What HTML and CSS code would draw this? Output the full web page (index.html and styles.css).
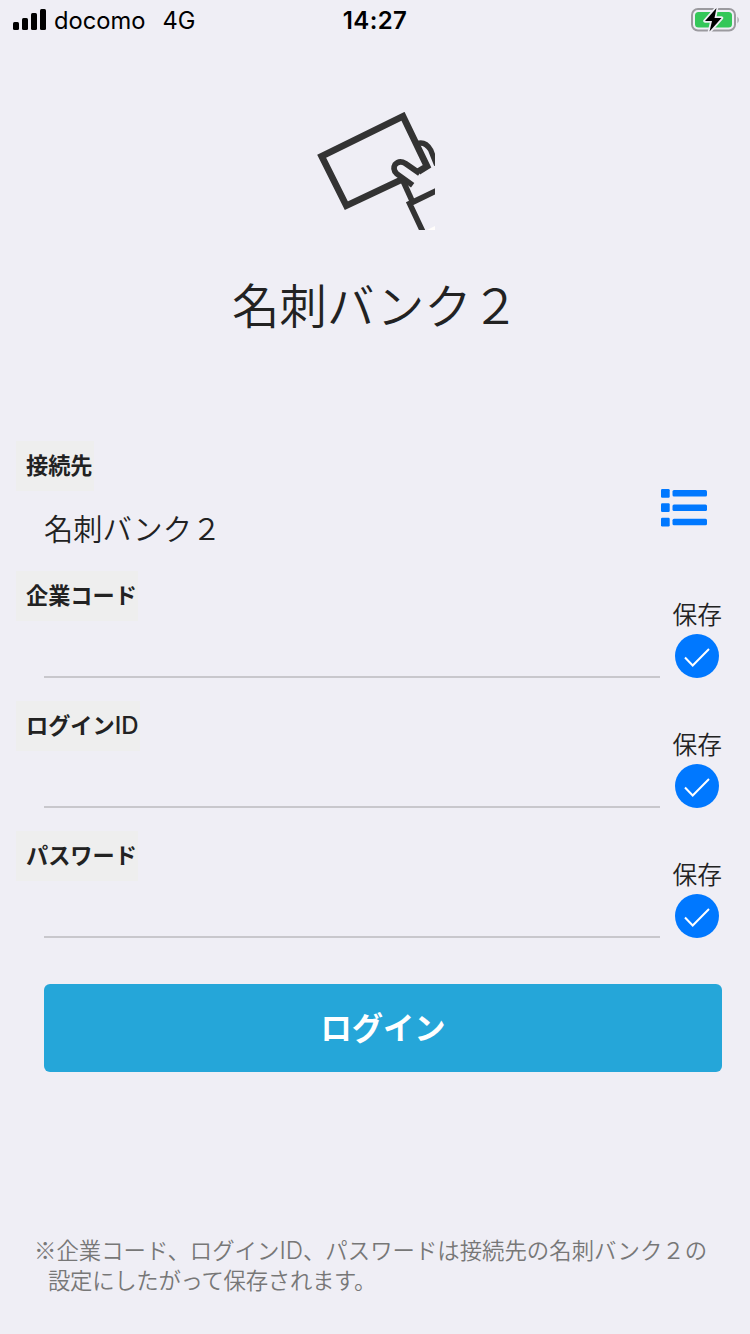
FILE: index.html
```
<!DOCTYPE html>
<html lang="ja">
<head>
    <meta charset="UTF-8">
    <meta name="viewport" content="width=device-width, initial-scale=1.0">
    <title>名刺バンク２</title>
    <link rel="stylesheet" href="styles.css">
</head>
<body>
    <header class="status-bar">
        <div class="carrier">
            <svg class="signal" width="34" height="22" viewBox="0 0 34 22">
                <rect x="0" y="13" width="6" height="8" rx="1.5"/>
                <rect x="9" y="9" width="6" height="12" rx="1.5"/>
                <rect x="18" y="4" width="6" height="17" rx="1.5"/>
                <rect x="27" y="0" width="6" height="21" rx="1.5"/>
            </svg>
            <span class="carrier-name">docomo</span>
            <span class="network">4G</span>
        </div>
        <div class="time">14:27</div>
        <svg class="battery" width="49" height="26" viewBox="0 0 49 26">
            <rect x="1" y="2" width="43" height="21.5" rx="6" fill="none" stroke="#9b9a9f" stroke-width="2"/>
            <path d="M46.5 9.5 Q49 13 46.5 16.5 Z" fill="#9b9a9f"/>
            <rect x="4" y="5" width="37" height="15.5" rx="3.5" fill="#34c759"/>
            <path d="M25.5 1 L14 14 H21 L18.5 24.5 L30.5 11 H23.5 Z" fill="#000" stroke="#efeef5" stroke-width="3.5" stroke-linejoin="round" paint-order="stroke"/>
        </svg>
    </header>

    <main>
        <div class="logo">
            <svg width="118" height="118" viewBox="36 36 354 354" fill="none" stroke="#333" stroke-width="20">
                <path d="M340 215 L366 199 L294 49 L50 169 L124 317 L292 238"/>
                <path d="M338 130 Q362 124 377 150 L395 195" stroke-width="16"/>
                <path d="M323 256 L275 221 Q262 207 270 194 Q283 179 302 191 L344 220" stroke-width="17"/>
                <path d="M293 240 L322 304" stroke-width="17"/>
                <path d="M395 272 L314 311 L354 396" stroke-width="17"/>
                <path d="M366 390 L390 378 V390 Z" fill="#fffdfb" stroke="none"/>
            </svg>
        </div>
        <h1>名刺バンク２</h1>

        <form>
            <div class="field">
                <label>接続先</label>
                <div class="server">名刺バンク２</div>
                <svg class="list-icon" width="46" height="38" viewBox="0 0 46 38" fill="#0078ff">
                    <rect x="0" y="0" width="8.7" height="8.7" rx="1.2"/>
                    <rect x="11.5" y="1" width="34.5" height="6.5" rx="1.5"/>
                    <rect x="0" y="14.3" width="8.7" height="8.7" rx="1.2"/>
                    <rect x="11.5" y="15.4" width="34.5" height="6.5" rx="1.5"/>
                    <rect x="0" y="28.8" width="8.7" height="8.7" rx="1.2"/>
                    <rect x="11.5" y="29.8" width="34.5" height="6.5" rx="1.5"/>
                </svg>
            </div>
            <div class="field">
                <label for="company">企業コード</label>
                <input type="text" id="company">
                <div class="save">
                    <span>保存</span>
                    <svg width="44" height="44" viewBox="0 0 44 44">
                        <circle cx="22" cy="22" r="22" fill="#0078ff"/>
                        <path d="M10 23.5 L17.7 31.5 L34 15" fill="none" stroke="#fff" stroke-width="2"/>
                    </svg>
                </div>
            </div>
            <div class="field">
                <label for="loginId">ログイン<span class="latin">ID</span></label>
                <input type="text" id="loginId">
                <div class="save">
                    <span>保存</span>
                    <svg width="44" height="44" viewBox="0 0 44 44">
                        <circle cx="22" cy="22" r="22" fill="#0078ff"/>
                        <path d="M10 23.5 L17.7 31.5 L34 15" fill="none" stroke="#fff" stroke-width="2"/>
                    </svg>
                </div>
            </div>
            <div class="field">
                <label for="password">パスワード</label>
                <input type="password" id="password">
                <div class="save">
                    <span>保存</span>
                    <svg width="44" height="44" viewBox="0 0 44 44">
                        <circle cx="22" cy="22" r="22" fill="#0078ff"/>
                        <path d="M10 23.5 L17.7 31.5 L34 15" fill="none" stroke="#fff" stroke-width="2"/>
                    </svg>
                </div>
            </div>
            <button type="submit">ログイン</button>
        </form>

        <p class="note">※企業コード、ログイン<span class="latin">ID</span>、パスワードは接続先の名刺バンク２の<br><span class="second">設定にしたがって保存されます。</span></p>
    </main>
</body>
</html>
```
FILE: styles.css
```
* {
    box-sizing: border-box;
}

body {
    margin: 0;
    height: 1334px;
    background-color: #efeef5;
    color: #222;
    font-family: Inter, "Noto Sans CJK JP", sans-serif;
    font-weight: 350;
    overflow: hidden;
}

.status-bar {
    display: grid;
    grid-template-columns: 1fr auto 1fr;
    align-items: center;
    height: 41px;
    padding: 0 10px 0 13px;
    color: #000;
}

.carrier {
    display: flex;
    align-items: center;
    font-size: 23.7px;
    font-weight: 400;
}

.signal {
    margin-top: -1px;
}

.carrier-name {
    margin-left: 7px;
}

.network {
    margin-left: 17px;
}

.time {
    margin-right: 3px;
    font-size: 24px;
    font-weight: 600;
    letter-spacing: 0.4px;
}

.battery {
    justify-self: end;
    margin-top: -1px;
}

.logo {
    display: flex;
    margin: 71px 0 0 317px;
}

h1 {
    margin: 41px 0 0;
    height: 70px;
    padding-left: 232px;
    font-size: 47.5px;
    font-weight: 350;
    line-height: 71px;
    white-space: nowrap;
}

form {
    margin-top: 100px;
}

.field {
    display: grid;
    grid-template-columns: 616px 1fr;
    grid-template-rows: 50px 57px;
    height: 130px;
    padding: 0 28px 0 44px;
}

label {
    grid-row: 1;
    grid-column: 1;
    justify-self: start;
    height: 50px;
    margin-left: -28px;
    padding: 0 1px 0 10px;
    background-color: #eee;
    font-size: 22.2px;
    font-weight: 700;
    line-height: 49px;
}

label .latin {
    font-size: 24px;
    font-weight: 500;
}

input {
    grid-row: 2;
    grid-column: 1;
    width: 616px;
    height: 57px;
    padding: 0;
    border: none;
    border-bottom: 2px solid #c8c7cc;
    background: none;
    font-size: 29px;
    outline: none;
}

.server {
    grid-row: 2;
    grid-column: 1;
    font-size: 29.3px;
    line-height: 77px;
}

.list-icon {
    grid-row: 1 / 3;
    grid-column: 1 / 3;
    justify-self: end;
    margin: 48px 15px 0 0;
}

.save {
    grid-row: 1 / 3;
    grid-column: 2;
    display: flex;
    flex-direction: column;
    align-items: flex-end;
    padding-top: 27px;
    font-size: 24.7px;
    line-height: 34px;
}

.save svg {
    flex: none;
    margin: 2px 3px 0 0;
}

button {
    display: block;
    width: 678px;
    height: 88px;
    margin: 23px 0 0 44px;
    padding: 0 0 4px;
    border: none;
    border-radius: 6px;
    background-color: #25a6d9;
    color: #fff;
    font-family: inherit;
    font-size: 31.3px;
    font-weight: 700;
}

.note {
    margin: 162px 0 0;
    padding-left: 48px;
    color: #777;
    font-family: "Noto Sans CJK JP", sans-serif;
    font-size: 22.4px;
    line-height: 30px;
    text-indent: -14px;
    white-space: nowrap;
}

.note .latin {
    font-family: Inter, sans-serif;
    font-size: 24px;
    line-height: 0;
}

.note .second {
    letter-spacing: -0.3px;
}
```
